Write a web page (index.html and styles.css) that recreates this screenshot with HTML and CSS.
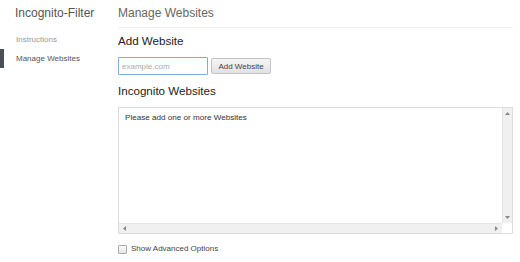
FILE: index.html
```html
<!DOCTYPE html>
<html lang="en">
<head>
  <meta charset="UTF-8">
  <title>Incognito-Filter | Manage Websites</title>
  <link rel="stylesheet" href="styles.css">
</head>
<body>
  <div class="page">
    <aside class="sidebar">
      <h1 class="brand">Incognito-Filter</h1>
      <nav>
        <a href="#instructions">Instructions</a>
        <a href="#manage" class="selected">Manage Websites</a>
      </nav>
    </aside>

    <main class="content">
      <header class="page-header">
        <h2>Manage Websites</h2>
      </header>

      <section class="block">
        <h3>Add Website</h3>
        <div class="add-row">
          <input type="text" class="site-input" placeholder="example.com">
          <button class="add-btn">Add Website</button>
        </div>
      </section>

      <section class="block">
        <h3>Incognito Websites</h3>
        <div class="list-box">
          <textarea class="site-list" wrap="off" spellcheck="false">Please add one or more Websites</textarea>
          <div class="vbar">
            <svg width="5" height="3" viewBox="0 0 5 3"><path d="M0 3h5L2.5 0z" fill="#8a8a8a"/></svg>
            <svg width="5" height="3" viewBox="0 0 5 3"><path d="M0 0h5L2.5 3z" fill="#8a8a8a"/></svg>
          </div>
          <div class="hbar">
            <svg width="3" height="5" viewBox="0 0 3 5"><path d="M3 0v5L0 2.5z" fill="#8a8a8a"/></svg>
            <svg width="3" height="5" viewBox="0 0 3 5"><path d="M0 0v5L3 2.5z" fill="#8a8a8a"/></svg>
          </div>
          <div class="corner"></div>
        </div>
      </section>

      <label class="advanced">
        <input type="checkbox">
        <span>Show Advanced Options</span>
      </label>
    </main>
  </div>
</body>
</html>
```

FILE: styles.css
```css
body {
  margin: 0;
  background-color: #fff;
  color: #333;
  font-family: 'Liberation Sans', Arial, sans-serif;
}
.page {
  display: flex;
  min-height: 262px;
}
.sidebar {
  width: 118px;
  flex-shrink: 0;
}
.brand {
  margin: 0;
  padding: 6px 0 7px 15px;
  font-size: 12px;
  line-height: 14px;
  font-weight: normal;
  color: #555;
}
nav {
  display: flex;
  flex-direction: column;
  margin-top: 3px;
}
nav a {
  display: block;
  height: 19px;
  line-height: 19px;
  padding-left: 16px;
  font-size: 8px;
  color: #999;
  text-decoration: none;
}
nav a.selected {
  color: #555;
  border-left: 4px solid #4b5058;
  padding-left: 12px;
}
.content {
  flex: 1;
  padding-right: 7px;
}
.page-header {
  border-bottom: 1px solid #eee;
}
.page-header h2 {
  margin: 0;
  padding: 6px 0 7px;
  font-size: 12px;
  line-height: 14px;
  font-weight: normal;
  color: #666;
}
.block h3 {
  margin: 6px 0 9px;
  font-size: 11.6px;
  line-height: 14px;
  font-weight: normal;
  color: #222;
}
.block + .block h3 {
  margin-top: 9px;
}
.add-row {
  display: flex;
  align-items: center;
  gap: 2px;
}
.site-input {
  box-sizing: border-box;
  width: 90px;
  height: 18px;
  margin: 0;
  padding: 0 3px;
  border: 1px solid #84a9de;
  border-radius: 1px;
  font-family: inherit;
  font-size: 8px;
  color: #333;
  outline: none;
}
.site-input::placeholder {
  color: #aaa;
}
.add-btn {
  box-sizing: border-box;
  width: 60px;
  height: 16px;
  margin: 0 0 0 1px;
  padding: 0;
  border: 1px solid #c3c3c3;
  border-radius: 2px;
  background: linear-gradient(#f6f6f6, #e2e2e2);
  font-family: inherit;
  font-size: 8px;
  color: #444;
}

/* textarea with its own (always visible) scrollbars */
.list-box {
  display: grid;
  grid-template-columns: 1fr 10px;
  grid-template-rows: 1fr 10px;
  height: 127px;
  box-sizing: border-box;
  border: 1px solid #dcdcdc;
}
.site-list {
  display: block;
  box-sizing: border-box;
  width: 100%;
  height: 100%;
  margin: 0;
  padding: 5px 6px;
  border: none;
  font-family: inherit;
  font-size: 8.1px;
  line-height: 10px;
  color: #333;
  resize: none;
  overflow: hidden;
  outline: none;
}
.vbar {
  display: flex;
  flex-direction: column;
  justify-content: space-between;
  align-items: center;
  padding: 4px 0;
  background-color: #f0f0f0;
  border-left: 1px solid #e4e4e4;
}
.hbar {
  display: flex;
  justify-content: space-between;
  align-items: center;
  padding: 0 4px;
  background-color: #f0f0f0;
  border-top: 1px solid #e4e4e4;
}
.corner {
  background-color: #fff;
}
.advanced {
  display: flex;
  align-items: center;
  gap: 4px;
  margin-top: 10px;
  font-size: 8px;
  line-height: 10px;
  color: #444;
}
.advanced input {
  appearance: none;
  box-sizing: border-box;
  width: 9px;
  height: 9px;
  margin: 0;
  border: 1px solid #a9a9a9;
  border-radius: 1px;
  background: linear-gradient(#fdfdfd, #e6e6e6);
}
```
